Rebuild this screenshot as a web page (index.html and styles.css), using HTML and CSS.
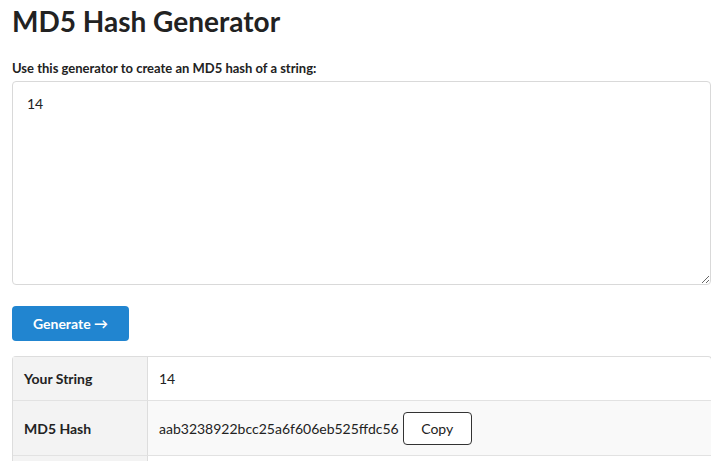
FILE: index.html
```html
<!DOCTYPE html>
<html>
<head>
<meta charset="utf-8">
<link rel="stylesheet" href="styles.css">
</head>
<body>
<div class="page">
  <h1 class="title">MD5 Hash Generator</h1>
  <label class="label" for="input">Use this generator to create an MD5 hash of a string:</label>
  <textarea id="input" class="input">14</textarea>
  <button class="generate">Generate →</button>
  <table class="results">
    <tr>
      <th>Your String</th>
      <td>14</td>
    </tr>
    <tr class="alt">
      <th>MD5 Hash</th>
      <td><span class="hash">aab3238922bcc25a6f606eb525ffdc56</span><button class="copy">Copy</button></td>
    </tr>
    <tr>
      <th>&nbsp;</th>
      <td>&nbsp;</td>
    </tr>
  </table>
</div>
</body>
</html>
```

FILE: styles.css
```css
html, body {
  margin: 0;
  padding: 0;
  background: #fff;
  overflow: hidden;
}
body {
  font-family: Lato, "Noto Sans", sans-serif;
  color: #222;
}
.page {
  padding: 0 0 0 12px;
  width: 699px;
}
.title {
  font-size: 28px;
  font-weight: 700;
  margin: 0;
  padding-top: 2px;
  line-height: 38px;
  color: #222;
}
.label {
  display: block;
  margin-top: 20px;
  font-size: 13px;
  font-weight: 700;
  line-height: 16px;
  color: #222;
}
.input {
  display: block;
  box-sizing: border-box;
  width: 699px;
  height: 204px;
  margin-top: 5px;
  padding: 13px 14px;
  border: 1px solid #d9d9d9;
  border-radius: 4px;
  font-family: Lato, sans-serif;
  font-size: 14px;
  color: #222;
  resize: vertical;
  outline: none;
}
.generate {
  display: block;
  margin-top: 21px;
  width: 117px;
  height: 35px;
  border: none;
  border-radius: 4px;
  background: #2185d0;
  color: #fff;
  font-family: Lato, sans-serif;
  font-size: 14px;
  font-weight: 700;
  padding: 0;
}
.results {
  margin-top: 15px;
  width: 700px;
  border-collapse: separate;
  border-spacing: 0;
  border: 1px solid #ddd;
  border-bottom: none;
  border-radius: 4px 4px 0 0;
  font-size: 14px;
}
.results th, .results td {
  border-bottom: 1px solid #e2e2e2;
  padding: 0 11px;
  height: 43px;
  text-align: left;
  vertical-align: middle;
}
.results th {
  width: 112px;
  background: #f3f3f3;
  font-weight: 700;
  border-right: 1px solid #ddd;
}
.results tr.alt td {
  background: #f9f9f9;
  height: 54px;
}
.hash {
  vertical-align: middle;
}
.copy {
  margin-left: 4px;
  width: 69px;
  height: 33px;
  border: 1px solid #333;
  border-radius: 4px;
  background: #fff;
  font-family: Lato, sans-serif;
  font-size: 14px;
  color: #222;
  vertical-align: middle;
}
```
